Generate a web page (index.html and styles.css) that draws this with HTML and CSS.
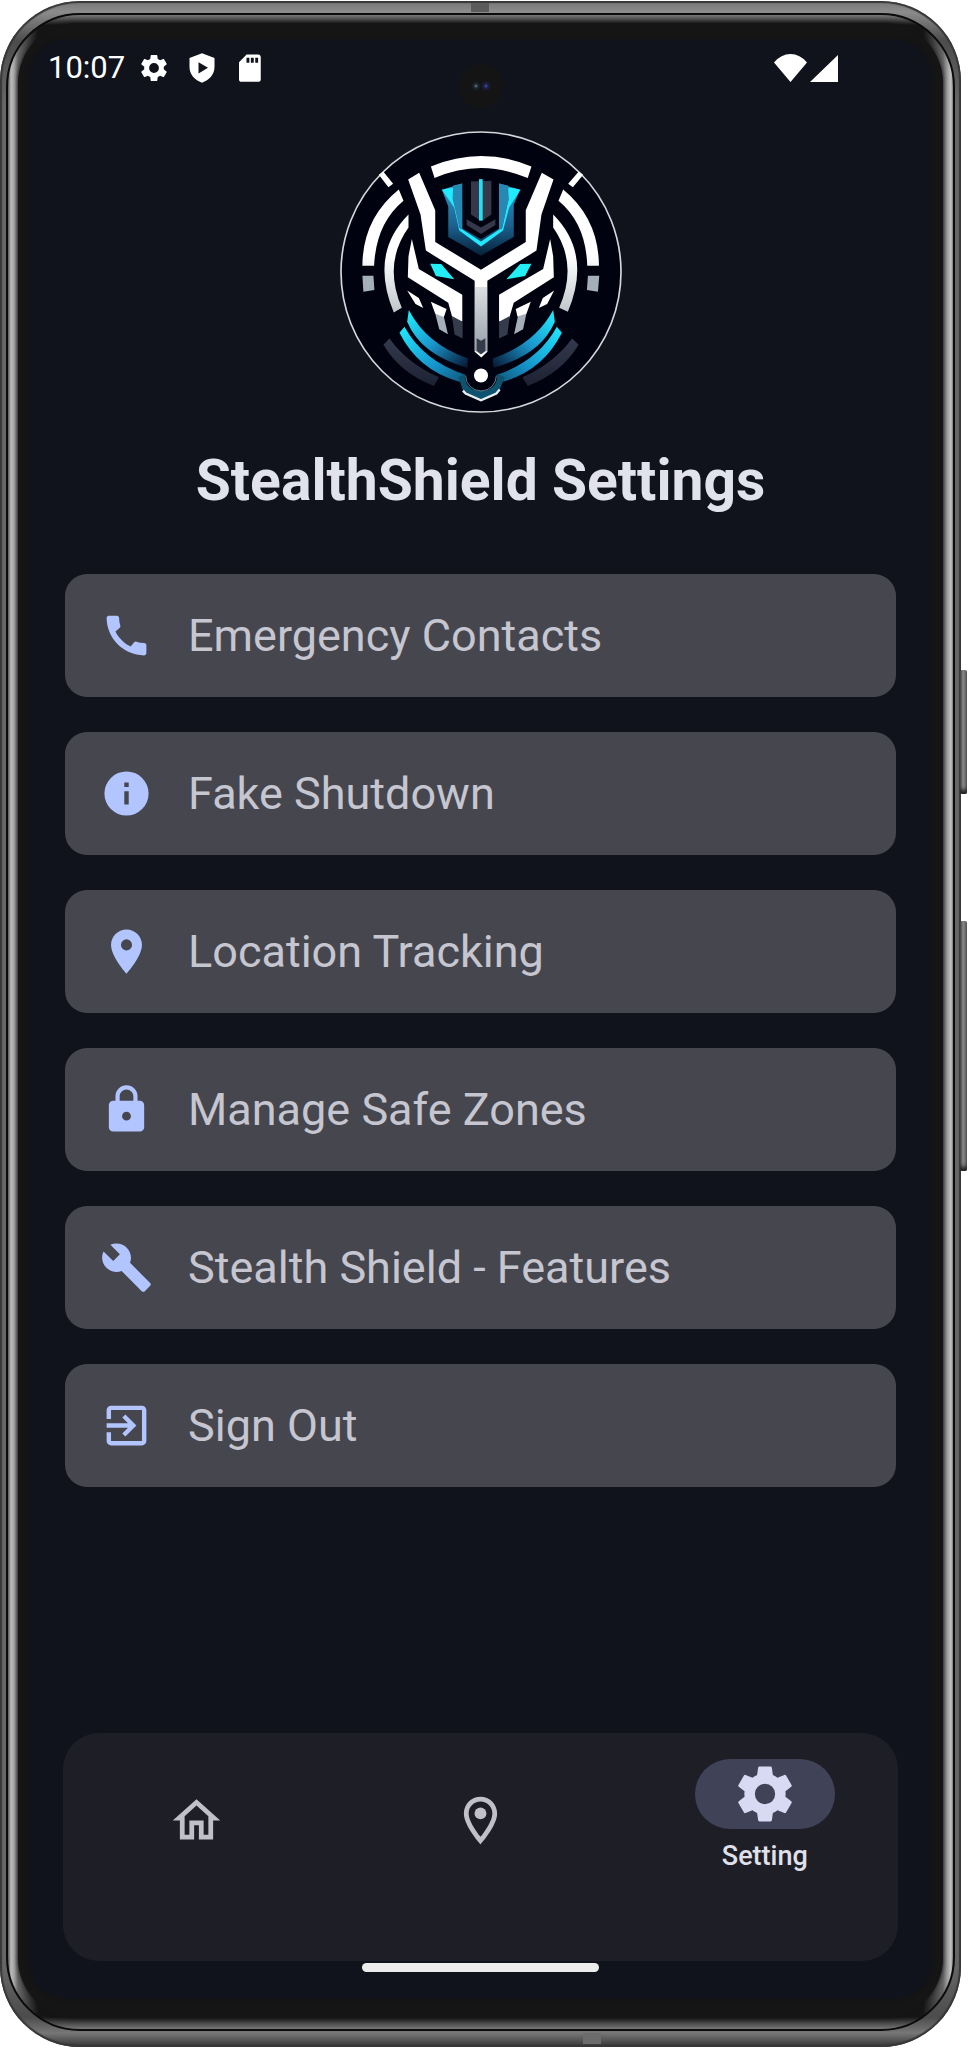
FILE: index.html
```html
<!DOCTYPE html>
<html lang="en">
<head>
<meta charset="utf-8">
<meta name="viewport" content="width=device-width, initial-scale=1">
<title>StealthShield Settings</title>
<link rel="stylesheet" href="styles.css">
</head>
<body>
<div class="phone">
  <span class="side-button side-button-power"></span>
  <span class="side-button side-button-volume"></span>
  <span class="antenna antenna-top"></span>
  <span class="antenna antenna-bottom"></span>
  <div class="rim">
    <div class="bezel">
      <span class="camera"></span>
      <div class="screen">
        <header class="status">
          <time class="clock">10:07</time>
          <svg class="status-icon" viewBox="1 1 22 22"><path d="M19.14 12.94c.04-.3.06-.61.06-.94s-.02-.64-.07-.94l2.03-1.58a.49.49 0 0 0 .12-.61l-1.92-3.32a.49.49 0 0 0-.59-.22l-2.39.96a7 7 0 0 0-1.62-.94L14.4 2.81a.48.48 0 0 0-.48-.41h-3.84a.47.47 0 0 0-.47.41l-.36 2.54a7.4 7.4 0 0 0-1.62.94l-2.39-.96a.48.48 0 0 0-.59.22L2.74 8.87a.47.47 0 0 0 .12.61l2.03 1.58a6 6 0 0 0-.02 1.88l-2.03 1.58a.49.49 0 0 0-.12.61l1.92 3.32c.12.22.37.29.59.22l2.39-.96c.5.38 1.03.7 1.62.94l.36 2.54c.05.24.24.41.48.41h3.84c.24 0 .44-.17.47-.41l.36-2.54a7 7 0 0 0 1.62-.94l2.39.96c.22.08.47 0 .59-.22l1.92-3.32a.47.47 0 0 0-.12-.61zM12 15.6a3.6 3.6 0 1 1 0-7.2 3.6 3.6 0 0 1 0 7.2z"/></svg>
          <svg class="status-icon" viewBox="0 0 24 24"><path fill-rule="evenodd" d="M12 .2l10 3.800v7.200c0 5.900-4.200 10.500-10 12.600C6.200 21.700 2 17.100 2 11.200V4zM9.200 7.300v9l7.600-4.500z"/></svg>
          <svg class="status-icon" viewBox="0 0 24 24"><path fill-rule="evenodd" d="M18.600 1.200H9.300L3.200 7.400v13.700c0 1.100.8 1.900 1.800 1.900h13.600c1.100 0 2-.8 2-1.900V3.200c0-1.100-.9-2-2-2zM11.500 7.800H9.200V3.700h2.300zm3.500 0h-2.300V3.700H15zm3.500 0h-2.300V3.700h2.300z"/></svg>
          <svg class="signal" viewBox="0 0 64 28"><path d="M0 8.500Q7 0 16.500 0T33 8.500L16.500 28zM64 1v27H36z"/></svg>
        </header>
        <main class="content">
          <svg class="logo" viewBox="32 33 844 844" role="img" aria-label="StealthShield logo">
            <defs>
              <linearGradient id="steel" x1="0" y1="0" x2="0" y2="1"><stop offset="0" stop-color="#fff"/><stop offset=".4" stop-color="#fff"/><stop offset="1" stop-color="#929ca6"/></linearGradient>
              <linearGradient id="cyan-left" x1="0" y1="0" x2="1" y2="1"><stop offset="0" stop-color="#22efff"/><stop offset=".5" stop-color="#1a97cd"/><stop offset="1" stop-color="#07142f"/></linearGradient>
              <linearGradient id="cyan-right" x1="1" y1="0" x2="0" y2="1"><stop offset="0" stop-color="#22efff"/><stop offset=".5" stop-color="#1a97cd"/><stop offset="1" stop-color="#07142f"/></linearGradient>
              <linearGradient id="arc-left" x1="0" y1="0" x2="1" y2="1"><stop offset="0" stop-color="#20eaff"/><stop offset=".6" stop-color="#1694cb"/><stop offset="1" stop-color="#0e5474"/></linearGradient>
              <linearGradient id="arc-right" x1="1" y1="0" x2="0" y2="1"><stop offset="0" stop-color="#20eaff"/><stop offset=".6" stop-color="#1694cb"/><stop offset="1" stop-color="#0e5474"/></linearGradient>
              <linearGradient id="crest" x1="0" y1="0" x2="0" y2="1"><stop offset="0" stop-color="#2d9bc5"/><stop offset=".6" stop-color="#1b5f8e"/><stop offset="1" stop-color="#062237"/></linearGradient>
              <linearGradient id="slate" x1="0" y1="0" x2="0" y2="1"><stop offset="0" stop-color="#343a4d"/><stop offset="1" stop-color="#1c2132"/></linearGradient>
            </defs>
            <circle cx="454" cy="455" r="419" fill="#01020f" stroke="#d5d7dd" stroke-width="5"/>
            <path fill="#fff" d="M304 139Q454 76 605 139L594 174Q454 114 315 174zM148 164l14-9 29 36-14 10zM760 164l-14-9-31 36 14 10z"/>
            <g fill="#fff">
              <path d="M236 178l33-20 48 112v95l137 83 134-83v-95l48-112 35 20-36 105-15 108-147 90v213l-18 17-20-17V481L289 391l-16-108z"/>
              <path d="M247 356l21 90 130 77v80l-28-5-14-51-121-76 2-63zM661 356l-21 90-132 77v80l29-5 15-51 120-76-2-63z"/>
            </g>
            <path fill="url(#steel)" d="M436 500h36v190l-18 12-18-12zM208 208l14 34Q140 310 134 436H99Q100 295 208 208zM700 208l-14 34q82 68 86 194h35Q806 295 700 208zM237 283v39Q160 430 217 562l-24 14Q120 400 237 283zM670 283v39Q746 430 688 562l26 12Q787 400 670 283z"/>
            <path fill="#a4afb9" d="M99 466h33l3 43-33 5zM774 466h34l-4 48-33-5zM317 579l25 6 13 56-26-15zM590 579l-25 6-12 56 27-15z"/>
            <path fill="#fff" d="M233 510l35 23 13 30-23-12zM304 544l47 22-8 24-26-10zM673 510l-34 23-12 30 25-12zM603 544l-45 22 5 22 27-8z"/>
            <path fill="#343c4c" d="M367 587l32 17v50l-24-12zM540 587l-32 17v50l25-12zM441 653l13 8 13-8v38l-13 10-13-10z"/>
            <path fill="url(#crest)" d="M337 209l60-19 1 135 56 31 54-31v-135l63 19-19 45v96l-98 56-98-56v-91z"/>
            <path fill="#21eaff" d="M337 209q22-6 43-6l-9 32 18 87 65 42 64-42 19-87-8-32q22 0 43 6l-34 54-18 68-66 48-65-48-15-68z"/>
            <path fill="#2788b4" d="M371 196l27-6v135l-6 3-23-92zM535 196l-27-6v135l8 3 21-92z"/>
            <path fill="#343849" d="M424 184l61-2v101l-30 20-31-20zM411 297l43 25 43-25v17l-43 27-43-27z"/>
            <path fill="#24dff4" d="M448 177h11v124h-11z"/>
            <path fill="#23eef5" d="M302 430l33 1 39 46-55-10zM605 430l-34 1-41 46 56-10z"/>
            <path fill="url(#cyan-left)" d="M238 569Q290 670 414 714v28Q275 704 233 604z"/>
            <path fill="url(#cyan-right)" d="M670 569Q616 670 490 714v28Q632 704 675 604z"/>
            <path fill="url(#arc-left)" d="M225 619Q280 720 405 762l3 27-24-7Q265 747 210 637z"/>
            <path fill="url(#arc-right)" d="M681 619Q626 720 504 762l-3 27 24-7q116-35 171-145z"/>
            <path fill="url(#slate)" d="M180 654Q235 730 328 770l-15 26Q212 758 162 673zM727 654Q670 730 578 770l16 26Q695 758 746 673z"/>
            <path fill="#0d526e" d="M387 770l19-10q-2 49 48 51 49-2 49-51l22 10-18 44-53 27-53-27z"/>
            <path fill="none" stroke="#e7eef1" stroke-width="7" d="M400 810l8 9 46 20 46-20 10-12"/>
            <circle cx="454" cy="765" r="46" fill="#01020f"/>
            <path fill="none" stroke="#9db4bf" stroke-width="2" d="M408 765a46 46 0 0 0 92 0"/>
            <circle cx="454" cy="765" r="21" fill="#fff"/>
          </svg>
          <h1 class="title">StealthShield Settings</h1>
          <div class="options">
            <button class="option" type="button"><svg class="option-icon" viewBox="0 0 24 24"><path d="M20.01 15.38c-1.230 0-2.420-.2-3.530-.56a.98.98 0 0 0-1.010.24l-1.570 1.970c-2.830-1.350-5.480-3.900-6.890-6.830l1.950-1.660c.27-.28.35-.67.24-1.020A11.200 11.200 0 0 1 8.640 3.990c0-.54-.45-.99-.99-.99H4.190C3.650 3 3 3.240 3 3.990 3 13.280 10.730 21 20.010 21c.71 0 .99-.63.99-1.180v-3.450c0-.54-.45-.99-.99-.99z"/></svg>Emergency Contacts</button>
            <button class="option" type="button"><svg class="option-icon" viewBox="0 0 24 24"><path d="M12 2a10 10 0 1 0 0 20 10 10 0 0 0 0-20zm1 15h-2v-6h2zm0-8h-2V7h2z"/></svg>Fake Shutdown</button>
            <button class="option" type="button"><svg class="option-icon" viewBox="0 0 24 24"><path d="M12 2C8.130 2 5 5.130 5 9c0 5.250 7 13 7 13s7-7.750 7-13c0-3.870-3.130-7-7-7zm0 9.500a2.500 2.500 0 0 1 0-5 2.500 2.500 0 0 1 0 5z"/></svg>Location Tracking</button>
            <button class="option" type="button"><svg class="option-icon" viewBox="0 0 24 24"><path d="M18 8h-1V6A5 5 0 0 0 7 6v2H6a2 2 0 0 0-2 2v10c0 1.100.9 2 2 2h12a2 2 0 0 0 2-2V10a2 2 0 0 0-2-2zm-6 9a2 2 0 1 1 0-4 2 2 0 0 1 0 4zm3.100-9H8.900V6a3.100 3.100 0 0 1 6.200 0z"/></svg>Manage Safe Zones</button>
            <button class="option" type="button"><svg class="option-icon" viewBox="0 0 24 24"><path d="M22.700 19l-9.100-9.100c.9-2.300.4-5-1.500-6.900-2-2-5-2.400-7.400-1.300L9 6 6 9 1.600 4.700C.4 7.100.9 10.100 2.900 12.100c1.900 1.900 4.600 2.400 6.900 1.500l9.100 9.100c.4.4 1 .4 1.400 0l2.300-2.300c.5-.4.5-1.100.1-1.400z"/></svg>Stealth Shield - Features</button>
            <button class="option" type="button"><svg class="option-icon" viewBox="0 0 24 24"><path d="M10.090 15.590L11.500 17l5-5-5-5-1.410 1.410L12.670 11H3v2h9.670zM19 3H5a2 2 0 0 0-2 2v4h2V5h14v14H5v-4H3v4a2 2 0 0 0 2 2h14c1.100 0 2-.9 2-2V5c0-1.100-.9-2-2-2z"/></svg>Sign Out</button>
          </div>
        </main>
        <nav class="tabs" aria-label="Main">
          <a class="tab" href="#home" aria-label="Home"><svg class="tab-icon" viewBox="0 0 24 24"><path d="M12 3L2 12h3v8h6v-6h2v6h6v-8h3zm5 15h-2v-6H9v6H7v-7.810l5-4.500 5 4.500z"/></svg></a>
          <a class="tab" href="#map" aria-label="Map"><svg class="tab-icon" viewBox="0 0 24 24"><path d="M12 2C8.130 2 5 5.130 5 9c0 5.250 7 13 7 13s7-7.750 7-13c0-3.870-3.130-7-7-7zM7 9c0-2.760 2.240-5 5-5s5 2.240 5 5c0 2.880-2.880 7.190-5 9.880C9.920 16.210 7 11.850 7 9z"/><circle cx="12" cy="9" r="2.500"/></svg></a>
          <a class="tab tab-active" href="#setting" aria-current="page"><span class="pill"><svg class="pill-icon" viewBox="0 0 24 24"><path d="M19.430 12.980c.04-.32.07-.64.07-.98s-.03-.66-.07-.98l2.110-1.650c.19-.15.24-.42.12-.64l-2-3.460c-.12-.22-.39-.3-.61-.22l-2.490 1a7.300 7.300 0 0 0-1.690-.98l-.38-2.650A.49.49 0 0 0 14 2h-4c-.25 0-.46.18-.49.42l-.38 2.650c-.61.25-1.170.59-1.690.98l-2.490-1a.48.48 0 0 0-.61.22l-2 3.460c-.13.22-.07.49.12.64l2.110 1.650a8 8 0 0 0 0 1.960l-2.110 1.650c-.19.15-.24.42-.12.64l2 3.460c.12.22.39.3.61.22l2.490-1c.52.4 1.080.73 1.690.98l.38 2.650c.03.24.24.42.49.42h4c.25 0 .46-.18.49-.42l.38-2.650c.61-.25 1.170-.59 1.690-.98l2.490 1c.23.09.49 0 .61-.22l2-3.460c.12-.22.07-.49-.12-.64zM12 15.700a3.700 3.700 0 1 1 0-7.400 3.700 3.700 0 0 1 0 7.400z"/></svg></span>Setting</a>
        </nav>
        <div class="home-indicator"></div>
      </div>
    </div>
  </div>
</div>
</body>
</html>
```
FILE: styles.css
```css
* {
  box-sizing: border-box;
}

body {
  margin: 0;
  background: #fff;
  font-family: Roboto, "Noto Sans", sans-serif;
}

svg {
  display: block;
  fill: currentColor;
  flex: none;
}

.phone {
  position: relative;
  display: flex;
  min-height: calc(100vh - 2px);
  margin: 1px 7px 1px 0;
  padding: 12px 6px 16px;
  border-radius: 80px;
  background: linear-gradient(#777, #8c8c8c 11px, #4c4c4c 40px, #666 100px, #666 calc(100% - 80px), #4c4c4c calc(100% - 30px), #777 calc(100% - 14px), #333);
  box-shadow: inset 0 0 1px 2px #363836;
}

.rim {
  flex: 1;
  display: flex;
  min-width: 0;
  padding: 8px 10px 11px;
  border: 2px solid #0b0b0b;
  border-radius: 74px;
  background:
    linear-gradient(#777, transparent 10px, transparent calc(100% - 12px), #777),
    linear-gradient(90deg, #555, #bbb 3px, #a5a5a5 6px, #666 10px, #151515 30px, #151515 calc(100% - 30px), #666 calc(100% - 10px), #999 calc(100% - 6px), #c4c4c4 calc(100% - 2px), #777);
}

.bezel {
  position: relative;
  flex: 1;
  display: flex;
  min-width: 0;
  padding: 17px 12px 20px;
  border-radius: 60px;
  background: #151515;
  box-shadow: 0 0 4px #151515;
}

.camera {
  position: absolute;
  z-index: 1;
  top: 41px;
  left: 50%;
  width: 44px;
  height: 44px;
  margin-left: -22px;
  border-radius: 50%;
  background:
    radial-gradient(circle at 17px 22px, #6f8591 0, #1a2831 2px, transparent 5px),
    radial-gradient(circle at 27px 22px, #4c559a 0, #1c2150 2px, transparent 5px),
    #141415;
}

.screen {
  flex: 1;
  display: flex;
  flex-direction: column;
  min-width: 0;
  padding-bottom: 26px;
  border-radius: 36px;
  background: #10131b;
  box-shadow: 0 0 4px #10131b;
}

.status {
  display: flex;
  align-items: center;
  height: 56px;
  padding: 0 93px 0 18px;
  color: #fff;
}

.clock {
  margin-right: 14px;
  font-size: 31px;
  line-height: 36px;
}

.status-icon {
  width: 30px;
  height: 30px;
  margin-right: 18px;
}

.signal {
  width: 64px;
  height: 28px;
  margin-left: auto;
}

.content {
  display: flex;
  flex-direction: column;
  align-items: center;
  padding: 35px 35px 32px;
}

.logo {
  width: 282px;
  height: 282px;
}

.title {
  margin: 32px 0 57px;
  color: #e1e2ec;
  font-size: 57px;
  font-weight: 700;
  line-height: 72px;
}

.options {
  display: flex;
  flex-direction: column;
  gap: 35px;
  width: 100%;
}

.option {
  display: flex;
  align-items: center;
  gap: 35px;
  width: 100%;
  padding: 35px;
  border: 0;
  border-radius: 22px;
  background: #46464f;
  color: #c6c6d0;
  font: 400 45px/53px Roboto, "Noto Sans", sans-serif;
  text-align: left;
}

.option-icon {
  width: 53px;
  height: 53px;
  color: #b3c5ff;
}

.tabs {
  display: grid;
  grid-template-columns: repeat(3, 1fr);
  gap: 18px;
  margin: auto 33px 2px;
  padding: 26px 0 80px;
  border-radius: 36px;
  background: #1e1e27;
}

.tab {
  display: flex;
  flex-direction: column;
  align-items: center;
  justify-content: center;
  color: #c0bfca;
  font-size: 27px;
  font-weight: 500;
  line-height: 34px;
  text-decoration: none;
}

.tab-icon {
  width: 57px;
  height: 57px;
}

.tab-active {
  gap: 10px;
  padding-bottom: 8px;
  color: #e0e0ea;
}

.pill {
  display: flex;
  align-items: center;
  justify-content: center;
  width: 140px;
  height: 70px;
  border-radius: 35px;
  background: #404357;
  color: #d8d9f3;
}

.pill-icon {
  width: 66px;
  height: 66px;
}

.home-indicator {
  width: 237px;
  height: 9px;
  margin: 0 auto;
  border-radius: 5px;
  background: #ececec;
}

.side-button {
  position: absolute;
  right: -6px;
  width: 7px;
  border-radius: 2px;
  background: linear-gradient(90deg, #444, #888 3px, #777 5px, #555);
  box-shadow: inset 0 -6px 4px -2px #222;
}

.side-button-power {
  top: 669px;
  height: 124px;
}

.side-button-volume {
  top: 920px;
  height: 250px;
}

.antenna {
  position: absolute;
  background: #5c5c5c;
}

.antenna-top {
  top: 2px;
  left: 471px;
  width: 18px;
  height: 9px;
}

.antenna-bottom {
  bottom: 3px;
  left: 583px;
  width: 18px;
  height: 11px;
  background: #6c6c6c;
}
```
